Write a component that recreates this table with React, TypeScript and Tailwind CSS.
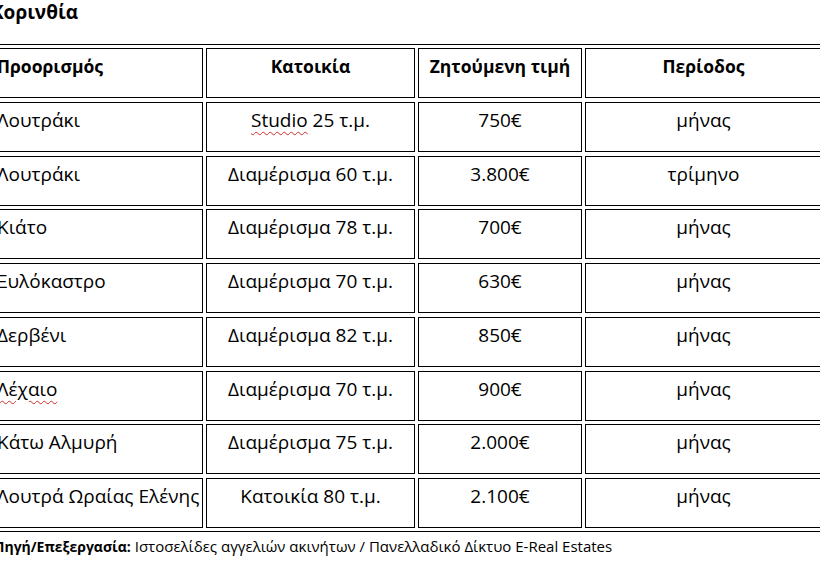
import React from "react";

type Row = [string, string, string, string];

const rows: Row[] = [
  ["Λουτράκι", "Studio 25 τ.μ.", "750€", "μήνας"],
  ["Λουτράκι", "Διαμέρισμα 60 τ.μ.", "3.800€", "τρίμηνο"],
  ["Κιάτο", "Διαμέρισμα 78 τ.μ.", "700€", "μήνας"],
  ["Ξυλόκαστρο", "Διαμέρισμα 70 τ.μ.", "630€", "μήνας"],
  ["Δερβένι", "Διαμέρισμα 82 τ.μ.", "850€", "μήνας"],
  ["Λέχαιο", "Διαμέρισμα 70 τ.μ.", "900€", "μήνας"],
  ["Κάτω Αλμυρή", "Διαμέρισμα 75 τ.μ.", "2.000€", "μήνας"],
  ["Λουτρά Ωραίας Ελένης", "Κατοικία 80 τ.μ.", "2.100€", "μήνας"],
];

// words Word flags with the red squiggle
const flagged = ["Studio", "Λέχαιο"];

const Text: React.FC<{ value: string }> = ({ value }) => {
  const word = flagged.find((w) => value.startsWith(w));
  if (!word) return <>{value}</>;
  return (
    <>
      <span className="underline decoration-wavy decoration-[#d42a2a] decoration-1 underline-offset-[4px]">
        {word}
      </span>
      {value.slice(word.length)}
    </>
  );
};

const Cell: React.FC<{ children: React.ReactNode; first?: boolean; head?: boolean }> = ({
  children,
  first,
  head,
}) => (
  <div
    className={
      "h-[50px] border border-black pt-[5px] leading-[24px] whitespace-nowrap " +
      (first ? "pl-[5px] text-left " : "text-center ") +
      (head ? "font-bold text-[17.5px]" : "text-[19px]")
    }
  >
    {children}
  </div>
);

const App: React.FC = () => {
  return (
    <div className="w-[820px] h-[561px] overflow-hidden bg-white text-black font-['Open_Sans',sans-serif]">
      <div className="ml-[-13px] w-[850px]">
        <h1 className="ml-[4px] text-[19px] font-bold leading-[24px]">Κορινθία</h1>

        <div className="mt-[20px] w-max border border-black p-[3px]">
          <div className="grid grid-cols-[212px_209px_164px_237px] gap-x-[3px] gap-y-[3.75px]">
            <Cell first head>Προορισμός</Cell>
            <Cell head>Κατοικία</Cell>
            <Cell head>Ζητούμενη τιμή</Cell>
            <Cell head>Περίοδος</Cell>
            {rows.map((r, i) => (
              <React.Fragment key={i}>
                <Cell first>
                  <Text value={r[0]} />
                </Cell>
                <Cell>
                  <Text value={r[1]} />
                </Cell>
                <Cell>{r[2]}</Cell>
                <Cell>{r[3]}</Cell>
              </React.Fragment>
            ))}
          </div>
        </div>

        <p className="ml-[7px] mt-[4px] text-[15px] leading-[20px]">
          <span className="font-bold text-[14px]">Πηγή/Επεξεργασία:</span> Ιστοσελίδες αγγελιών
          ακινήτων / Πανελλαδικό Δίκτυο E-Real Estates
        </p>
      </div>
    </div>
  );
};

export default App;
